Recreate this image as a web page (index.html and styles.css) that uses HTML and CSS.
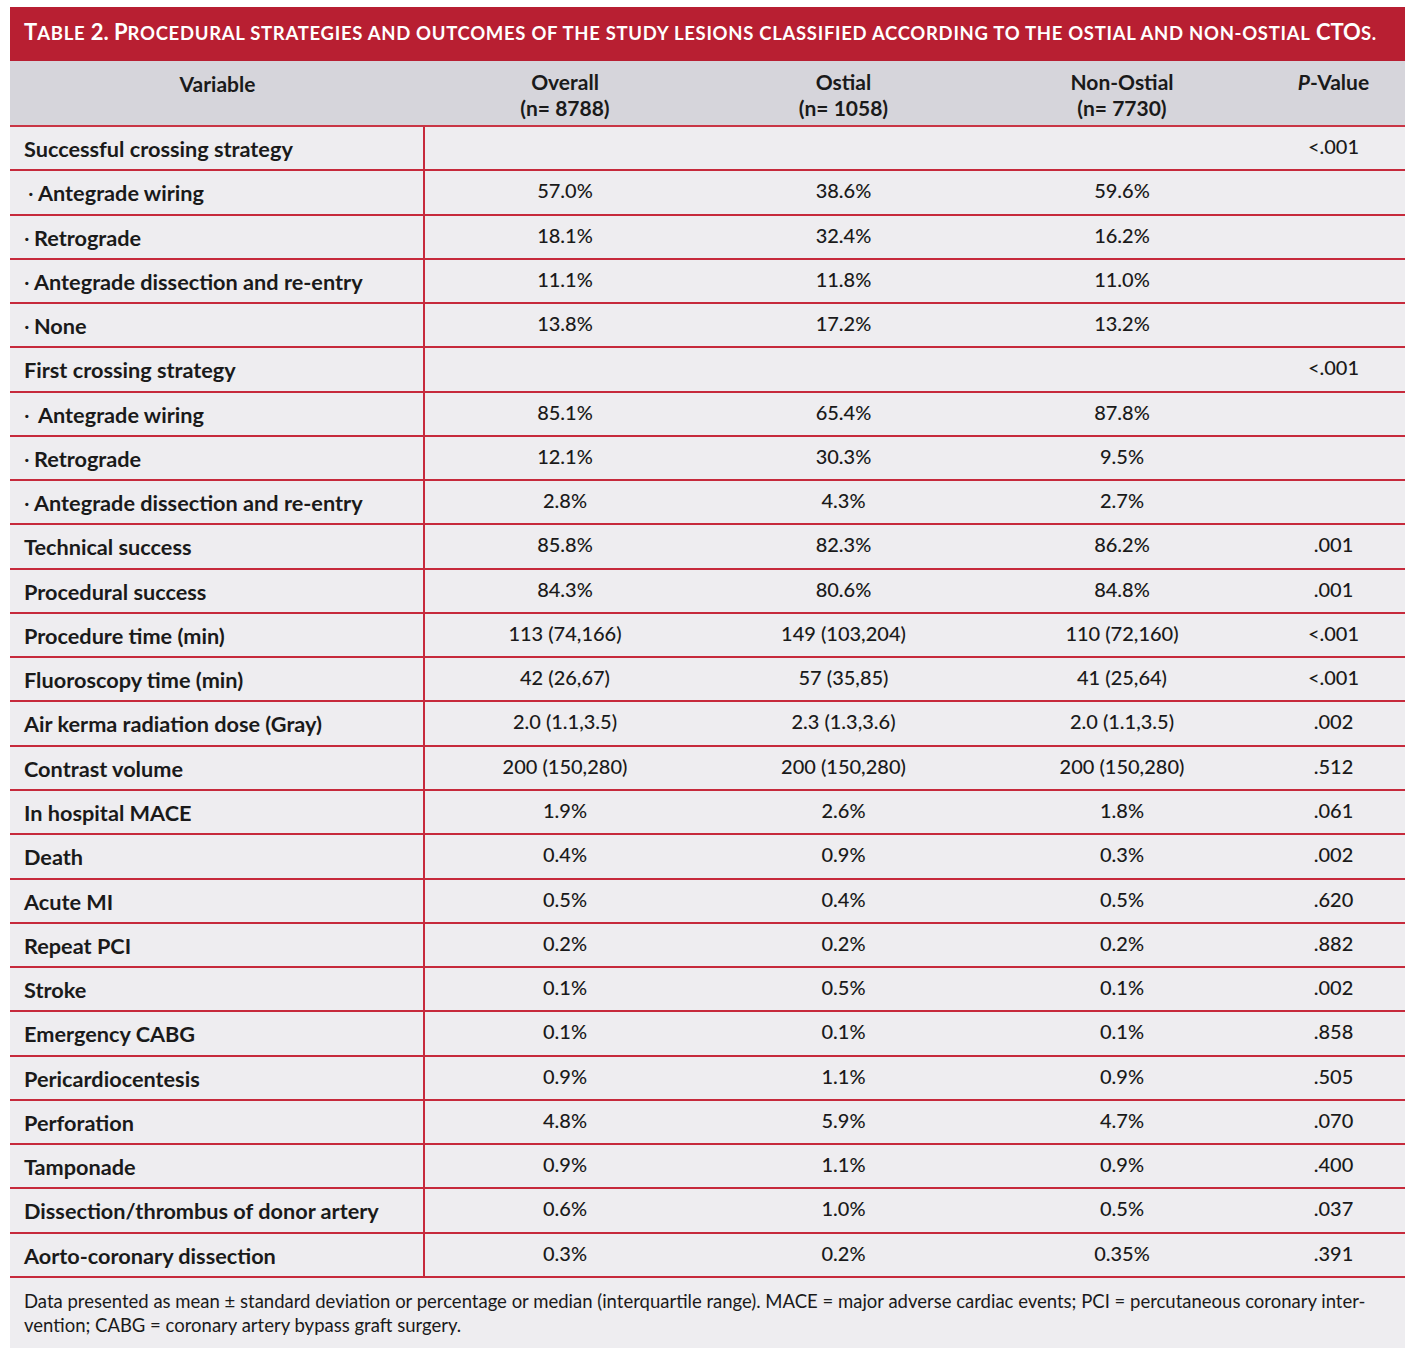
FILE: index.html
```html
<!DOCTYPE html>
<html>
<head>
<meta charset="utf-8">
<link rel="stylesheet" href="styles.css">
</head>
<body>
<div class="page">
  <div class="title">T<span class="sc">able</span> 2. P<span class="sc">rocedural strategies and outcomes of the study lesions classified according to the ostial and non-ostial</span> CTO<span class="sc">s.</span></div>
  <div class="head">
    <div class="hc hvar">Variable</div>
    <div class="hc">Overall<br>(n= 8788)</div>
    <div class="hc">Ostial<br>(n= 1058)</div>
    <div class="hc">Non-Ostial<br>(n= 7730)</div>
    <div class="hc hp"><i>P</i>-Value</div>
  </div>
  <div class="body">
    <div class="row"><div class="lab">Successful crossing strategy</div><div class="val"></div><div class="val"></div><div class="val"></div><div class="val">&lt;.001</div></div>
    <div class="row"><div class="lab sub1"><span class="dot">·</span>Antegrade wiring</div><div class="val">57.0%</div><div class="val">38.6%</div><div class="val">59.6%</div><div class="val"></div></div>
    <div class="row"><div class="lab sub"><span class="dot">·</span>Retrograde</div><div class="val">18.1%</div><div class="val">32.4%</div><div class="val">16.2%</div><div class="val"></div></div>
    <div class="row"><div class="lab sub"><span class="dot">·</span>Antegrade dissection and re-entry</div><div class="val">11.1%</div><div class="val">11.8%</div><div class="val">11.0%</div><div class="val"></div></div>
    <div class="row"><div class="lab sub"><span class="dot">·</span>None</div><div class="val">13.8%</div><div class="val">17.2%</div><div class="val">13.2%</div><div class="val"></div></div>
    <div class="row"><div class="lab">First crossing strategy</div><div class="val"></div><div class="val"></div><div class="val"></div><div class="val">&lt;.001</div></div>
    <div class="row"><div class="lab sub2"><span class="dot">·</span>Antegrade wiring</div><div class="val">85.1%</div><div class="val">65.4%</div><div class="val">87.8%</div><div class="val"></div></div>
    <div class="row"><div class="lab sub"><span class="dot">·</span>Retrograde</div><div class="val">12.1%</div><div class="val">30.3%</div><div class="val">9.5%</div><div class="val"></div></div>
    <div class="row"><div class="lab sub"><span class="dot">·</span>Antegrade dissection and re-entry</div><div class="val">2.8%</div><div class="val">4.3%</div><div class="val">2.7%</div><div class="val"></div></div>
    <div class="row"><div class="lab">Technical success</div><div class="val">85.8%</div><div class="val">82.3%</div><div class="val">86.2%</div><div class="val">.001</div></div>
    <div class="row"><div class="lab">Procedural success</div><div class="val">84.3%</div><div class="val">80.6%</div><div class="val">84.8%</div><div class="val">.001</div></div>
    <div class="row"><div class="lab">Procedure time (min)</div><div class="val">113 (74,166)</div><div class="val">149 (103,204)</div><div class="val">110 (72,160)</div><div class="val">&lt;.001</div></div>
    <div class="row"><div class="lab">Fluoroscopy time (min)</div><div class="val">42 (26,67)</div><div class="val">57 (35,85)</div><div class="val">41 (25,64)</div><div class="val">&lt;.001</div></div>
    <div class="row"><div class="lab">Air kerma radiation dose (Gray)</div><div class="val">2.0 (1.1,3.5)</div><div class="val">2.3 (1.3,3.6)</div><div class="val">2.0 (1.1,3.5)</div><div class="val">.002</div></div>
    <div class="row"><div class="lab">Contrast volume</div><div class="val">200 (150,280)</div><div class="val">200 (150,280)</div><div class="val">200 (150,280)</div><div class="val">.512</div></div>
    <div class="row"><div class="lab">In hospital MACE</div><div class="val">1.9%</div><div class="val">2.6%</div><div class="val">1.8%</div><div class="val">.061</div></div>
    <div class="row"><div class="lab">Death</div><div class="val">0.4%</div><div class="val">0.9%</div><div class="val">0.3%</div><div class="val">.002</div></div>
    <div class="row"><div class="lab">Acute MI</div><div class="val">0.5%</div><div class="val">0.4%</div><div class="val">0.5%</div><div class="val">.620</div></div>
    <div class="row"><div class="lab">Repeat PCI</div><div class="val">0.2%</div><div class="val">0.2%</div><div class="val">0.2%</div><div class="val">.882</div></div>
    <div class="row"><div class="lab">Stroke</div><div class="val">0.1%</div><div class="val">0.5%</div><div class="val">0.1%</div><div class="val">.002</div></div>
    <div class="row"><div class="lab">Emergency CABG</div><div class="val">0.1%</div><div class="val">0.1%</div><div class="val">0.1%</div><div class="val">.858</div></div>
    <div class="row"><div class="lab">Pericardiocentesis</div><div class="val">0.9%</div><div class="val">1.1%</div><div class="val">0.9%</div><div class="val">.505</div></div>
    <div class="row"><div class="lab">Perforation</div><div class="val">4.8%</div><div class="val">5.9%</div><div class="val">4.7%</div><div class="val">.070</div></div>
    <div class="row"><div class="lab">Tamponade</div><div class="val">0.9%</div><div class="val">1.1%</div><div class="val">0.9%</div><div class="val">.400</div></div>
    <div class="row"><div class="lab">Dissection/thrombus of donor artery</div><div class="val">0.6%</div><div class="val">1.0%</div><div class="val">0.5%</div><div class="val">.037</div></div>
    <div class="row"><div class="lab">Aorto-coronary dissection</div><div class="val">0.3%</div><div class="val">0.2%</div><div class="val">0.35%</div><div class="val">.391</div></div>
  </div>
  <div class="foot">Data presented as mean ± standard deviation or percentage or median (interquartile range). MACE = major adverse cardiac events; PCI = percutaneous coronary inter-<br>vention; CABG = coronary artery bypass graft surgery.</div>
</div>
</body>
</html>
```

FILE: styles.css
```css
html, body {
  margin: 0;
  padding: 0;
  background: #ffffff;
}
.page {
  width: 1395px;
  margin: 7px 0 0 10px;
  font-family: Lato, "Liberation Sans", sans-serif;
  color: #1a1a1a;
}
.title {
  background: #b81f32;
  color: #ffffff;
  height: 54px;
  box-sizing: border-box;
  padding: 11px 0 0 14px;
  font-weight: 700;
  font-size: 22px;
  white-space: nowrap;
}
.title .sc {
  text-transform: uppercase;
  font-size: 18.5px;
  letter-spacing: 0.7px;
}
.head, .row {
  display: grid;
  grid-template-columns: 415px 280px 277px 280px 143px;
}
.head {
  background: #d6d5db;
  height: 66px;
  box-sizing: border-box;
  border-bottom: 2px solid #c93545;
  font-weight: 700;
  font-size: 21px;
  line-height: 26px;
}
.hc {
  text-align: center;
  padding-top: 8px;
}
.hvar {
  padding-top: 10px;
}
.hp {
  padding-top: 8px;
}
.hp i {
  font-style: italic;
}
.body {
  background: #eeedf0;
}
.row {
  height: 44.27px;
  box-sizing: border-box;
  border-bottom: 2px solid #c62a3c;
}
.lab {
  border-right: 2px solid #c62a3c;
  font-weight: 700;
  font-size: 21.7px;
  padding: 9px 0 0 14px;
  white-space: nowrap;
}
.dot {
  font-weight: 400;
  display: inline-block;
  width: 10px;
}
.lab.sub1 {
  padding-left: 18px;
}
.lab.sub2 .dot {
  width: 14px;
}
.val {
  text-align: center;
  font-size: 20px;
  font-weight: 500;
  padding-top: 7px;
}
.foot {
  background: #eeedf0;
  height: 70px;
  box-sizing: border-box;
  padding: 11px 0 0 14px;
  font-size: 18.5px;
  line-height: 24px;
  white-space: nowrap;
}
```
